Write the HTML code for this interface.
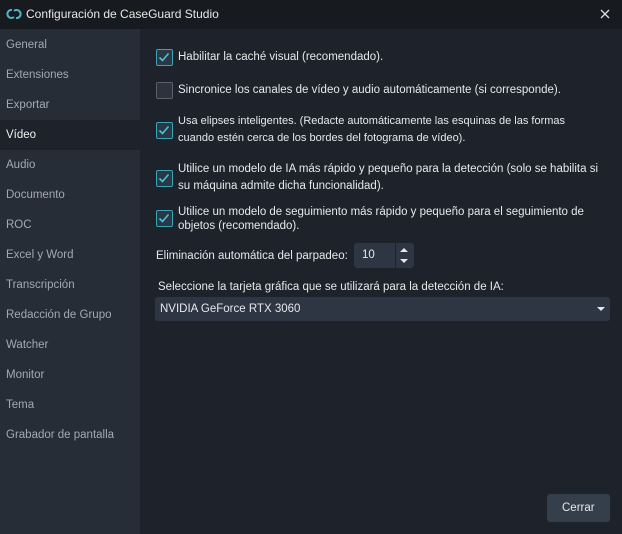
<!DOCTYPE html>
<html><head><style>
*{margin:0;padding:0;box-sizing:border-box}
body{width:622px;height:534px;background:#1e232b;font-family:"Liberation Sans",sans-serif;color:#e6e8eb;font-size:11.5px;position:relative;overflow:hidden}
.title{position:absolute;left:0;top:0;width:622px;height:29px;background:#171a1f;font-size:12px;color:#e8e8e8}
.title span{position:absolute;left:26px;top:7px}
.side{position:absolute;left:0;top:29px;width:140px;height:505px;background:#272d37;padding-top:1px}
.side div{height:30px;line-height:30px;padding-left:6px;color:#a3a9b2;font-size:11.5px}
.side div.sel{background:#1e232b;color:#f0f0f0}
.cb{position:absolute;left:156px;width:17px;height:17px;border:1.5px solid #3aa3b5;background:#2a3744;border-radius:2px}
.cb.off{border-color:#59606a;background:#2d333c}
.cb svg{position:absolute;left:1px;top:1px}
.t{position:absolute;left:178px;line-height:17px;font-size:11.5px;white-space:nowrap}
.box{position:absolute;background:#2e3643;border-radius:3px}
</style></head><body>
<div class="title">
<svg style="position:absolute;left:6px;top:7px" width="16" height="14" viewBox="0 0 16 14"><path d="M6 3 A4 4 0 1 0 8 10" stroke="#49b8c9" stroke-width="2" fill="none"/><path d="M10 11 A4 4 0 1 0 8 4" stroke="#49b8c9" stroke-width="2" fill="none"/></svg>
<span>Configuración de CaseGuard Studio</span>
<svg style="position:absolute;left:600px;top:9px" width="10" height="10"><path d="M1 1L9 9M9 1L1 9" stroke="#ddd" stroke-width="1.3"/></svg>
</div>
<div class="side">
<div>General</div><div>Extensiones</div><div>Exportar</div><div class="sel">Vídeo</div><div>Audio</div><div>Documento</div><div>ROC</div><div>Excel y Word</div><div>Transcripción</div><div>Redacción de Grupo</div><div>Watcher</div><div>Monitor</div><div>Tema</div><div>Grabador de pantalla</div>
</div>
<div class="cb" style="top:49px"><svg width="12" height="12"><path d="M1.5 6.5L4.5 9.5L10.5 2.5" stroke="#4cc3d6" stroke-width="1.6" fill="none"/></svg></div>
<div class="t" style="top:49px">Habilitar la caché visual (recomendado).</div>
<div class="cb off" style="top:82px"></div>
<div class="t" style="top:82px">Sincronice los canales de vídeo y audio automáticamente (si corresponde).</div>
<div class="cb" style="top:122px"><svg width="12" height="12"><path d="M1.5 6.5L4.5 9.5L10.5 2.5" stroke="#4cc3d6" stroke-width="1.6" fill="none"/></svg></div>
<div class="t" style="top:113px;font-size:11px">Usa elipses inteligentes. (Redacte automáticamente las esquinas de las formas<br>cuando estén cerca de los bordes del fotograma de vídeo).</div>
<div class="cb" style="top:170px"><svg width="12" height="12"><path d="M1.5 6.5L4.5 9.5L10.5 2.5" stroke="#4cc3d6" stroke-width="1.6" fill="none"/></svg></div>
<div class="t" style="top:161px">Utilice un modelo de IA más rápido y pequeño para la detección (solo se habilita si<br>su máquina admite dicha funcionalidad).</div>
<div class="cb" style="top:210px"><svg width="12" height="12"><path d="M1.5 6.5L4.5 9.5L10.5 2.5" stroke="#4cc3d6" stroke-width="1.6" fill="none"/></svg></div>
<div class="t" style="top:205px;line-height:14px">Utilice un modelo de seguimiento más rápido y pequeño para el seguimiento de<br>objetos (recomendado).</div>
<div class="t" style="left:156px;top:248px">Eliminación automática del parpadeo:</div>
<div class="box" style="left:354px;top:243px;width:60px;height:25px"></div>
<div class="t" style="left:362px;top:247px">10</div>
<div style="position:absolute;left:395px;top:243px;width:1px;height:25px;background:#1e232b"></div>
<svg style="position:absolute;left:399px;top:246px" width="10" height="20"><path d="M1 6L5 2L9 6Z M1 13L5 17L9 13Z" fill="#e6e8eb"/></svg>
<div class="t" style="left:158px;top:279px">Seleccione la tarjeta gráfica que se utilizará para la detección de IA:</div>
<div class="box" style="left:155px;top:297px;width:455px;height:24px"></div>
<div class="t" style="left:160px;top:301px">NVIDIA GeForce RTX 3060</div>
<svg style="position:absolute;left:596px;top:306px" width="10" height="6"><path d="M1 1L5 5L9 1Z" fill="#e6e8eb"/></svg>
<div class="box" style="left:547px;top:494px;width:63px;height:28px;background:#353e4b"></div>
<div class="t" style="left:562px;top:500px">Cerrar</div>
</body></html>
